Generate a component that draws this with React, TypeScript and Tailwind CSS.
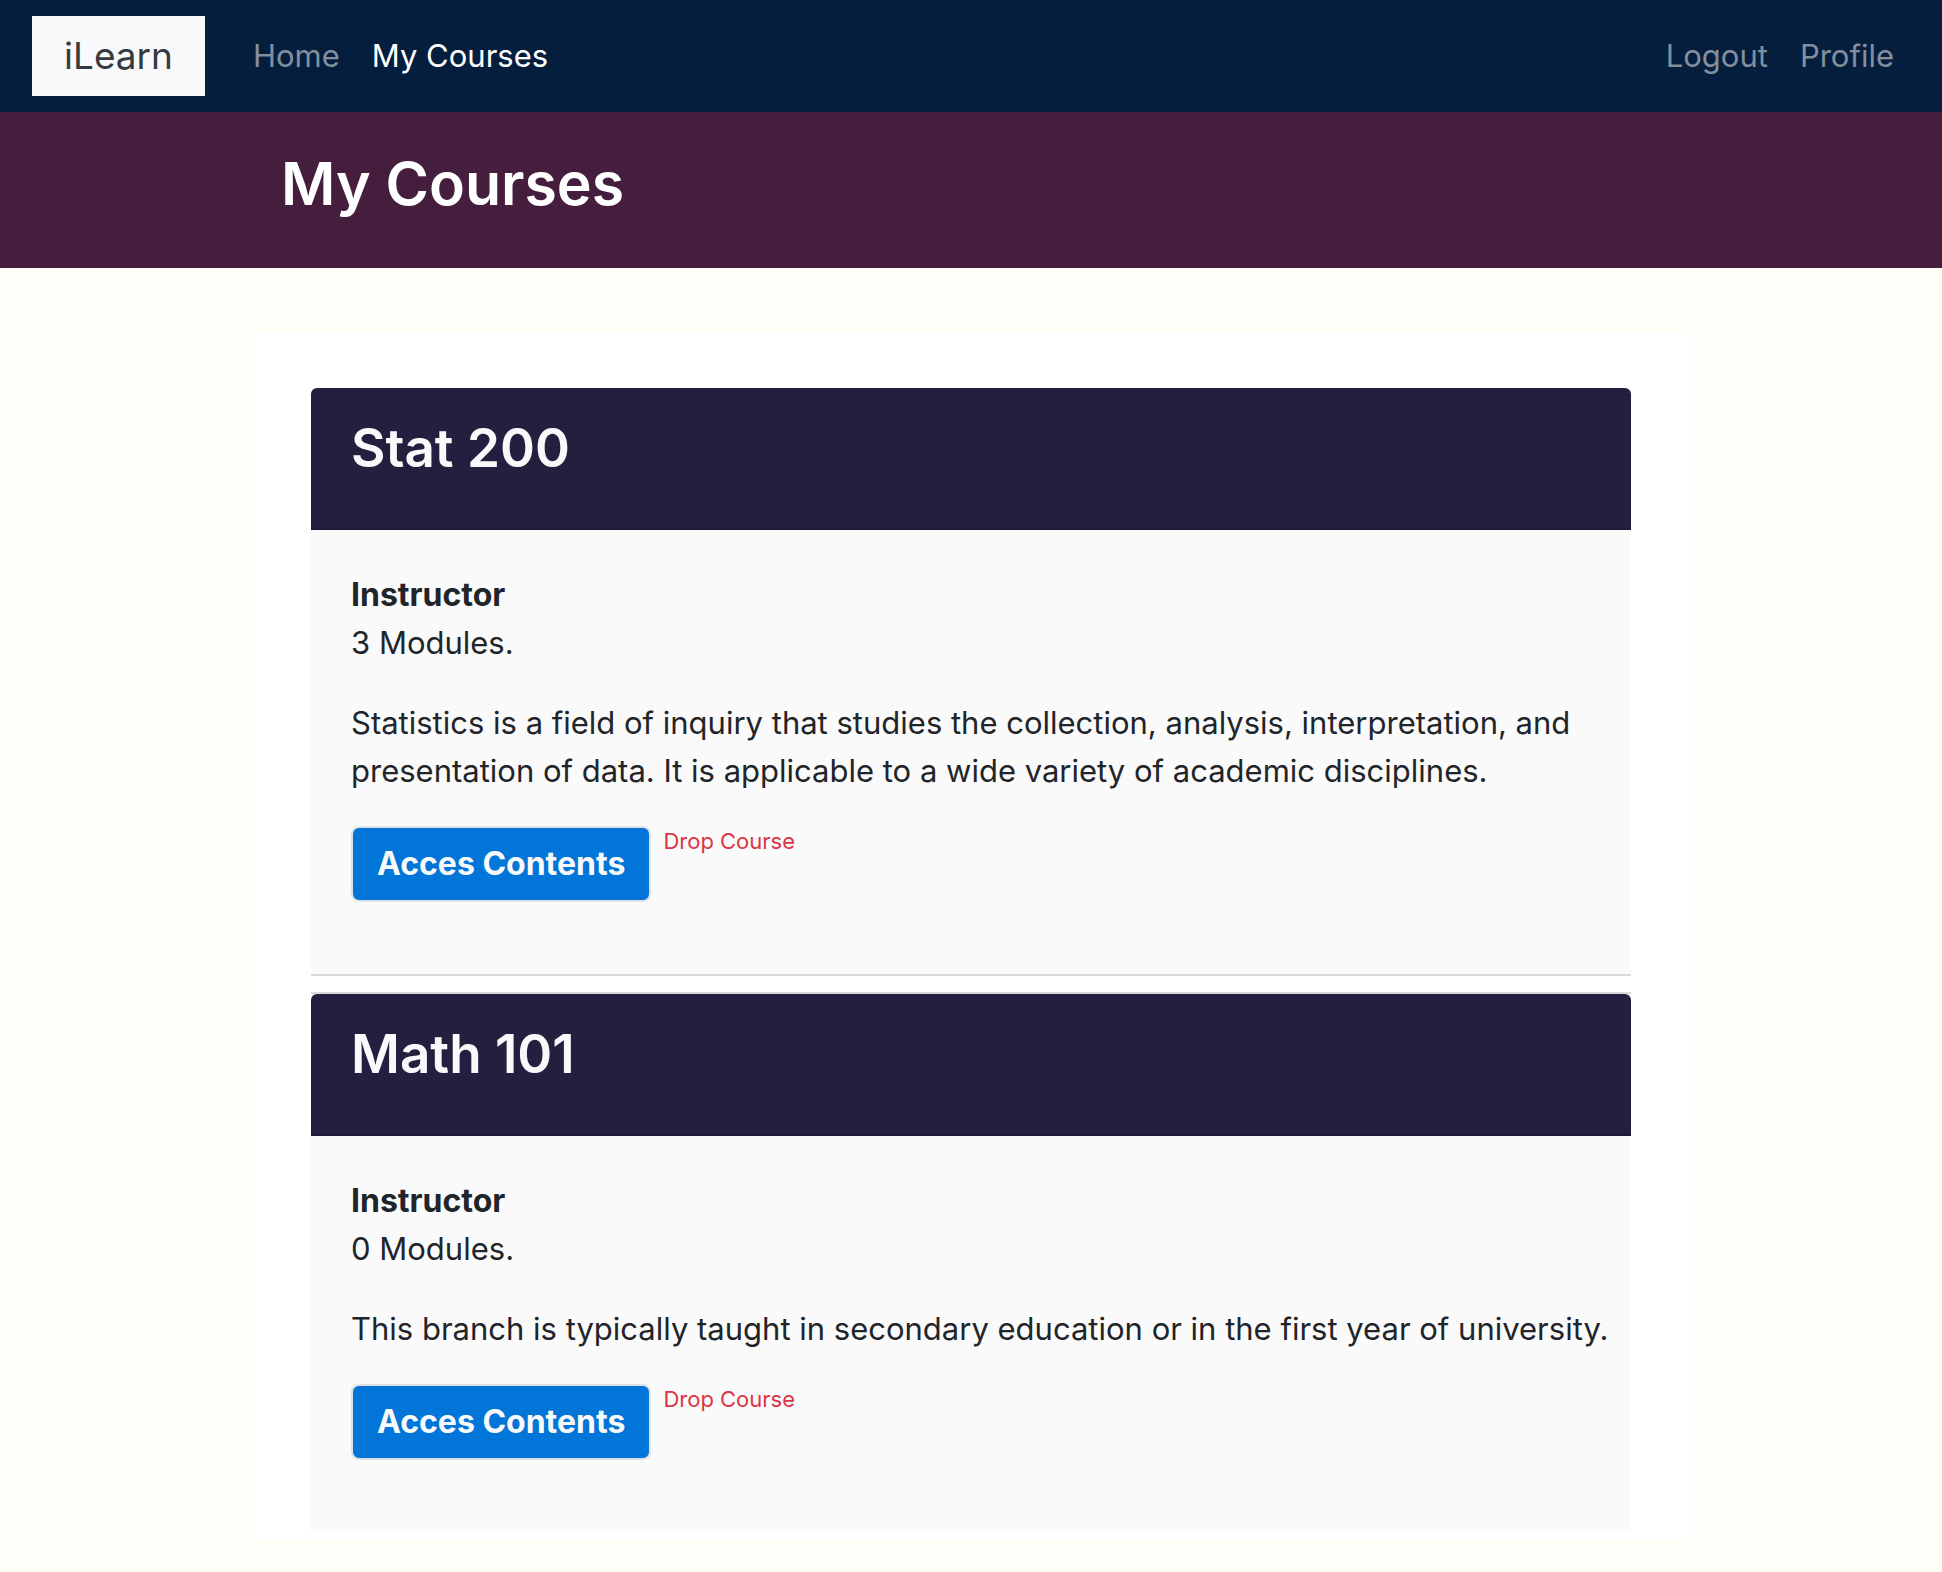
const courses = [
  { title: 'Stat 200', modules: 3, text: 'Statistics is a field of inquiry that studies the collection, analysis, interpretation, and presentation of data. It is applicable to a wide variety of academic disciplines.' },
  { title: 'Math 101', modules: 0, text: 'This branch is typically taught in secondary education or in the first year of university.' },
];

function Course({ title, modules, text }: { title: string; modules: number; text: string }) {
  return (
    <article className="border-[#d9dadb] not-first:mt-4 not-first:border-t-2 not-last:border-b-2">
      <header className="h-[142px] rounded-t-md border-b-2 border-[#201a38] bg-[#251e3e] px-10 pt-7">
        <h2 className="text-[53px] leading-[64px] font-semibold text-[#f8f9fa]">{title}</h2>
      </header>
      <div className="bg-[#fafafa] pt-[41px] pr-4 pb-[72px] pl-10">
        <p className="text-[32px] font-bold">Instructor</p>
        <p>{modules} Modules.</p>
        <p className="mt-8">{text}</p>
        <div className="mt-[31px] flex items-start gap-3">
          <button className="rounded-lg border-2 border-[#dee2e6] bg-[#0275d8] px-6 py-3 text-[32px] font-bold text-[#f8f9fa]">Acces Contents</button>
          <button className="text-[22px] leading-[30px] text-[#dc3545]">Drop Course</button>
        </div>
      </div>
    </article>
  );
}

export default function App() {
  return (
    <div className="min-h-screen bg-[#fffef9] font-['Inter',sans-serif] text-[31px] leading-[48px] text-[#212529]">
      <nav className="flex h-28 items-center bg-[#051e3e] px-8">
        <a href="#" className="flex h-20 items-center bg-[#f8f9fa] px-8 text-[37px] text-[#343a40]">iLearn</a>
        <a href="#" className="ml-12 text-[#828f9f]">Home</a>
        <a href="#" className="ml-8 text-white">My Courses</a>
        <a href="#" className="ml-auto text-[#828f9f]">Logout</a>
        <a href="#" className="mr-4 ml-8 text-[#828f9f]">Profile</a>
      </nav>
      <header className="h-[156px] bg-[#451e3e] pt-8">
        <h1 className="mx-auto max-w-[1380px] text-[59px] leading-[80px] font-semibold text-white">My Courses</h1>
      </header>
      <main className="mx-auto mt-16 max-w-[1440px] bg-white px-[60px] pt-14 pb-2">
        {courses.map((c) => <Course key={c.title} {...c} />)}
      </main>
    </div>
  );
}
